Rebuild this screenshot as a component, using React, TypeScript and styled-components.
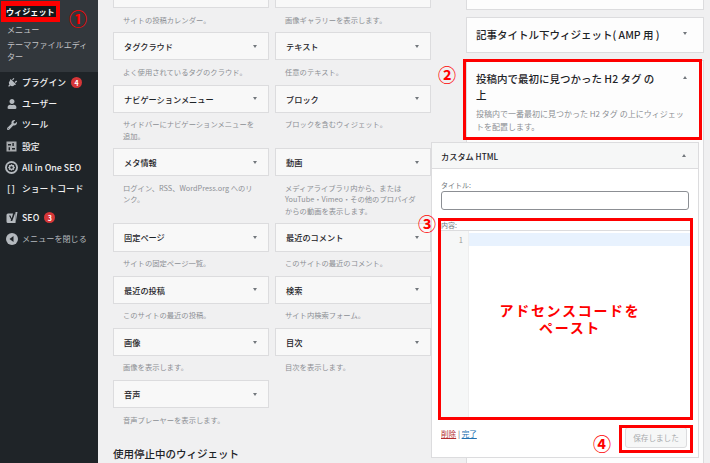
import styled, { createGlobalStyle } from 'styled-components'
import { FaPlug, FaUser, FaWrench } from 'react-icons/fa'

const GlobalStyle = createGlobalStyle`
    html, body {
        margin: 0;
        padding: 0;
        background: #f0f0f1;
    }
    * {
        box-sizing: border-box;
    }
`

const Page = styled.div`
    position: relative;
    display: flex;
    width: 710px;
    height: 463px;
    overflow: hidden;
    font-family: "Noto Sans CJK JP", "Noto Sans", sans-serif;
    color: #1d2327;
    background: #f0f0f1;
`

const Sidebar = styled.nav`
    flex: 0 0 98px;
    background: #1f2428;
    color: #f0f0f1;
`

const SubMenu = styled.div`
    height: 72px;
    padding-top: 1px;
    background: #32373c;
`

const ActiveSub = styled.div`
    width: 59px;
    height: 21px;
    margin-left: 1px;
    border: 5px solid #fe0000;
    border-right-width: 4px;
    background: #14181b;
    color: #fff;
    font-size: 8.1px;
    font-weight: 700;
    line-height: 11px;
    white-space: nowrap;
`

const SubItem = styled.div`
    width: 92px;
    padding: 2px 0 2px 7px;
    color: #c3c4c7;
    font-size: 8.1px;
    line-height: 11.4px;
`

const MenuList = styled.div`
    display: flex;
    flex-direction: column;
`

const MenuItem = styled.div<{ $gap?: boolean; $dim?: boolean }>`
    display: flex;
    align-items: center;
    gap: 4px;
    height: 21.2px;
    margin-top: ${p => (p.$gap ? '8px' : '0')};
    padding-left: 5px;
    color: ${p => (p.$dim ? '#b4b9be' : '#f0f0f1')};
    font-size: ${p => (p.$dim ? '8.1px' : '8.8px')};
    font-weight: ${p => (p.$dim ? 400 : 500)};
    white-space: nowrap;
`

const MenuIcon = styled.span`
    display: flex;
    flex: 0 0 13px;
    align-items: center;
    justify-content: center;
    color: #b4b9be;
    font-size: 10px;
`

const Brackets = styled.span`
    font-size: 9px;
    font-weight: 700;
    letter-spacing: 1px;
    color: #dcdcde;
`

const Badge = styled.span`
    display: inline-flex;
    align-items: center;
    justify-content: center;
    width: 11px;
    height: 11px;
    margin-left: 1px;
    border-radius: 50%;
    background: #d63638;
    color: #fff;
    font-size: 7px;
    font-weight: 700;
`

const Main = styled.main`
    display: flex;
    flex: 1;
    padding-left: 15px;
`

const Available = styled.section`
    flex: 0 0 318px;
    margin-top: -20px;
`

const WidgetGrid = styled.div`
    display: grid;
    grid-template-columns: 156px 156px;
    column-gap: 6px;
`

const WidgetCell = styled.div`
    min-width: 0;
`

const WidgetCard = styled.div`
    display: flex;
    align-items: center;
    justify-content: space-between;
    height: 28.2px;
    padding: 0 11px 0 10px;
    border: 1px solid #dcdcde;
    background: #f8f8f8;
    font-size: 8.2px;
    font-weight: 500;
`

const Caret = styled.span<{ $up?: boolean }>`
    flex: none;
    width: 0;
    height: 0;
    margin-left: auto;
    border-left: 2.5px solid transparent;
    border-right: 2.5px solid transparent;
    border-top: ${p => (p.$up ? '0' : '3px solid #72777c')};
    border-bottom: ${p => (p.$up ? '3px solid #72777c' : '0')};
`

const WidgetDesc = styled.p`
    margin: 0;
    padding: 6.4px 10px 6.3px;
    color: #8c8f94;
    font-size: 7.3px;
    line-height: 11.4px;
`

const InactiveHeading = styled.h2`
    margin: 14px 0 0;
    font-size: 10.5px;
    font-weight: 500;
    line-height: 16px;
`

const Areas = styled.aside`
    display: flex;
    flex: 0 0 238px;
    flex-direction: column;
    gap: 7px;
    margin: -26px 0 0 35px;
`

const AreaCard = styled.div`
    border: 1px solid #dcdcde;
    background: #fdfdfd;
`

const AreaHead = styled.div<{ $tall?: boolean }>`
    display: flex;
    align-items: ${p => (p.$tall ? 'flex-start' : 'center')};
    justify-content: space-between;
    min-height: 34px;
    padding: ${p => (p.$tall ? '10px 16px 0 9px' : '0 16px 0 9px')};
    font-size: 10.5px;
    font-weight: 500;
    line-height: 16px;
    & > span:last-child {
        margin-top: ${p => (p.$tall ? '5px' : '-3px')};
    }
`

const AreaTitle = styled.span`
    width: 182px;
`

const AreaDesc = styled.p`
    margin: 0;
    padding: 4px 14px 0 9px;
    color: #8c8f94;
    font-size: 8px;
    line-height: 13px;
`

const HtmlPanel = styled.div`
    position: relative;
    width: 268px;
    height: 316px;
    margin: 9px 0 6px -36px;
    border: 1px solid #dcdcde;
    background: #fff;
`

const PanelHead = styled.div`
    display: flex;
    align-items: center;
    justify-content: space-between;
    height: 26px;
    padding: 0 12px 0 9px;
    border-bottom: 1px solid #dcdcde;
    background: #f6f7f7;
    font-size: 8.2px;
    font-weight: 500;
`

const PanelBody = styled.div`
    padding: 11px 9px 0;
`

const FieldLabel = styled.div`
    height: 10px;
    color: #72777c;
    font-size: 7px;
    line-height: 10px;
`

const TitleInput = styled.div`
    height: 19px;
    margin-top: 1px;
    border: 1px solid #8c8f94;
    border-radius: 3px;
    background: #fff;
`

const ContentLabel = styled(FieldLabel)`
    margin-top: 10px;
`

const Editor = styled.div`
    display: flex;
    width: 250px;
    height: 187px;
    border-top: 1px solid #dcdcde;
`

const Gutter = styled.div`
    flex: 0 0 28px;
    padding: 2px 5px 0 0;
    border-right: 1px solid #eeeeee;
    background: #f6f7f7;
    color: #999;
    font-size: 7.5px;
    line-height: 13px;
    text-align: right;
`

const CodeArea = styled.div`
    flex: 1;
    padding-top: 2px;
`

const ActiveLine = styled.div`
    height: 13px;
    background: #e8f2fe;
`

const PanelFoot = styled.div`
    display: flex;
    align-items: flex-start;
    justify-content: space-between;
    padding: 10px 2px 0 0;
`

const FootLinks = styled.div`
    padding-top: 1px;
    color: #50575e;
    font-size: 7.6px;
`

const FootLink = styled.a<{ $danger?: boolean }>`
    color: ${p => (p.$danger ? '#b32d2e' : '#2271b1')};
    text-decoration: underline;
`

const SavedButton = styled.button`
    width: 62px;
    height: 21px;
    padding: 0;
    border: 1px solid #dcdcde;
    border-radius: 3px;
    background: #f6f7f7;
    color: #a7aaad;
    font-family: inherit;
    font-size: 7.6px;
`

/* annotations painted on top of the screenshot */
const Frame = styled.div<{ $x: number; $y: number; $w: number; $h: number }>`
    position: absolute;
    left: ${p => p.$x}px;
    top: ${p => p.$y}px;
    width: ${p => p.$w}px;
    height: ${p => p.$h}px;
    border: 3px solid #fe0000;
    pointer-events: none;
`

const Step = styled.span<{ $x: number; $y: number }>`
    position: absolute;
    left: ${p => p.$x}px;
    top: ${p => p.$y}px;
    transform: translate(-50%, -50%);
    color: #fe0000;
    font-size: 18px;
    font-weight: 700;
    line-height: 1;
`

const PasteNote = styled.div`
    position: absolute;
    left: 470px;
    top: 302px;
    width: 200px;
    color: #fe0000;
    font-size: 14px;
    font-weight: 700;
    letter-spacing: 1.7px;
    line-height: 17px;
    text-align: center;
`

const widgets: { name: string; desc: string }[] = [
    { name: '', desc: 'サイトの投稿カレンダー。' },
    { name: '', desc: '画像ギャラリーを表示します。' },
    { name: 'タグクラウド', desc: 'よく使用されているタグのクラウド。' },
    { name: 'テキスト', desc: '任意のテキスト。' },
    { name: 'ナビゲーションメニュー', desc: 'サイドバーにナビゲーションメニューを追加。' },
    { name: 'ブロック', desc: 'ブロックを含むウィジェット。' },
    { name: 'メタ情報', desc: 'ログイン、RSS、WordPress.org へのリンク。' },
    { name: '動画', desc: 'メディアライブラリ内から、または YouTube・Vimeo・その他のプロバイダからの動画を表示します。' },
    { name: '固定ページ', desc: 'サイトの固定ページ一覧。' },
    { name: '最近のコメント', desc: 'このサイトの最近のコメント。' },
    { name: '最近の投稿', desc: 'このサイトの最近の投稿。' },
    { name: '検索', desc: 'サイト内検索フォーム。' },
    { name: '画像', desc: '画像を表示します。' },
    { name: '目次', desc: '目次を表示します。' },
    { name: '音声', desc: '音声プレーヤーを表示します。' },
]

const SettingsIcon = () => (
    <svg width="11" height="11" viewBox="0 0 11 11">
        <rect x="0.5" y="0.5" width="10" height="10" fill="#a7aaad" />
        <path d="M2 3h3v1.4H2zM6.4 2h1.4v3H6.4zM2.6 6.2H4v3H2.6zM6 7h3v1.4H6z" fill="#1f2428" />
    </svg>
)

const SeoRingIcon = () => (
    <svg width="13" height="13" viewBox="0 0 13 13">
        <circle cx="6.5" cy="6.5" r="6.5" fill="#b4b9be" />
        <circle cx="6.5" cy="6.5" r="4.6" fill="#1f2428" />
        <path d="M6.5 3l1 1.1 1.5-.2.1 1.5 1 1-1 1 -.1 1.5-1.5-.2-1 1.1-1-1.1-1.5.2-.1-1.5-1-1 1-1 .1-1.5 1.5.2z" fill="#b4b9be" />
        <circle cx="6.5" cy="6.5" r="1.2" fill="#1f2428" />
    </svg>
)

const YoastIcon = () => (
    <svg width="12" height="13" viewBox="0 0 12 13">
        <path d="M2 2.5h7.5v9.5H2a1.5 1.5 0 0 1-1.500-1.500V4A1.500 1.500 0 0 1 2 2.500z" fill="#b4b9be" />
        <path d="M3 4.500h1.500l1.200 3L7.500 1h2L6.200 10H4.600l.5-1.400z" fill="#1f2428" />
        <path d="M9.500 1h2L9.500 12z" fill="#b4b9be" />
    </svg>
)

const CollapseIcon = () => (
    <svg width="12" height="12" viewBox="0 0 12 12">
        <circle cx="6" cy="6" r="6" fill="#b4b9be" />
        <path d="M7.500 3v6L3.500 6z" fill="#1f2428" />
    </svg>
)

const App = () => {
    return (
        <Page>
            <GlobalStyle />
            <Sidebar>
                <SubMenu>
                    <ActiveSub>ウィジェット</ActiveSub>
                    <SubItem>メニュー</SubItem>
                    <SubItem>テーマファイルエディター</SubItem>
                </SubMenu>
                <MenuList>
                    <MenuItem><MenuIcon><FaPlug style={{ transform: 'rotate(45deg)' }} /></MenuIcon>プラグイン<Badge>4</Badge></MenuItem>
                    <MenuItem><MenuIcon><FaUser /></MenuIcon>ユーザー</MenuItem>
                    <MenuItem><MenuIcon><FaWrench /></MenuIcon>ツール</MenuItem>
                    <MenuItem><MenuIcon><SettingsIcon /></MenuIcon>設定</MenuItem>
                    <MenuItem><MenuIcon><SeoRingIcon /></MenuIcon>All in One SEO</MenuItem>
                    <MenuItem><MenuIcon><Brackets>[]</Brackets></MenuIcon>ショートコード</MenuItem>
                    <MenuItem $gap><MenuIcon><YoastIcon /></MenuIcon>SEO<Badge>3</Badge></MenuItem>
                    <MenuItem $dim><MenuIcon><CollapseIcon /></MenuIcon>メニューを閉じる</MenuItem>
                </MenuList>
            </Sidebar>
            <Main>
                <Available>
                    <WidgetGrid>
                        {widgets.map(w => (
                            <WidgetCell key={w.desc}>
                                <WidgetCard>{w.name}<Caret /></WidgetCard>
                                <WidgetDesc>{w.desc}</WidgetDesc>
                            </WidgetCell>
                        ))}
                    </WidgetGrid>
                    <InactiveHeading>使用停止中のウィジェット</InactiveHeading>
                </Available>
                <Areas>
                    <AreaCard>
                        <AreaHead />
                    </AreaCard>
                    <AreaCard>
                        <AreaHead>記事タイトル下ウィジェット( AMP 用 )<Caret /></AreaHead>
                    </AreaCard>
                    <AreaCard>
                        <AreaHead $tall>
                            <AreaTitle>投稿内で最初に見つかった H2 タグ の上</AreaTitle>
                            <Caret $up />
                        </AreaHead>
                        <AreaDesc>投稿内で一番最初に見つかった H2 タグ の上にウィジェットを配置します。</AreaDesc>
                        <HtmlPanel>
                            <PanelHead>カスタム HTML<Caret $up /></PanelHead>
                            <PanelBody>
                                <FieldLabel>タイトル:</FieldLabel>
                                <TitleInput />
                                <ContentLabel>内容:</ContentLabel>
                                <Editor>
                                    <Gutter>1</Gutter>
                                    <CodeArea><ActiveLine /></CodeArea>
                                </Editor>
                                <PanelFoot>
                                    <FootLinks><FootLink $danger>削除</FootLink> | <FootLink>完了</FootLink></FootLinks>
                                    <SavedButton disabled>保存しました</SavedButton>
                                </PanelFoot>
                            </PanelBody>
                        </HtmlPanel>
                    </AreaCard>
                </Areas>
            </Main>
            <Frame $x={463} $y={59} $w={239} $h={81} />
            <Frame $x={438} $y={218} $w={255} $h={202} />
            <Frame $x={619} $y={425} $w={74} $h={28} />
            <Step $x={78} $y={18}>①</Step>
            <Step $x={447} $y={74}>②</Step>
            <Step $x={427} $y={223}>③</Step>
            <Step $x={602} $y={443}>④</Step>
            <PasteNote>アドセンスコードを<br />ペースト</PasteNote>
        </Page>
    )
}

export default App
